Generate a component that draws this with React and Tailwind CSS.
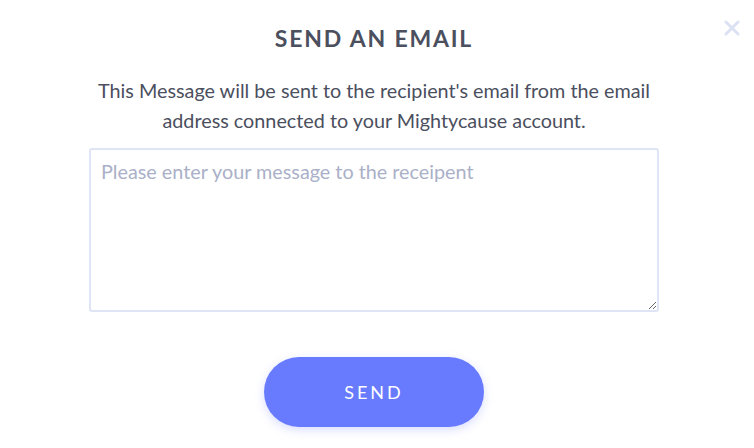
import React from 'react';

const CloseIcon = () => (
  <svg width="16" height="16" viewBox="0 0 16 16" fill="none">
    <path d="M2 2L14 14M14 2L2 14" stroke="#dde1f4" strokeWidth="3" strokeLinecap="round" />
  </svg>
);

const App = () => {
  return (
    <div className="relative w-[754px] h-[448px] bg-white overflow-hidden" style={{ fontFamily: 'Lato, "Open Sans", sans-serif' }}>
      <button aria-label="Close" className="absolute top-[20px] right-[14px]">
        <CloseIcon />
      </button>
      <div className="flex flex-col items-center pr-[6px] pt-[24px]">
        <h2 className="text-[23px] leading-[28px] font-bold tracking-[1.8px] text-[#4b4f5e]">SEND AN EMAIL</h2>
        <p className="mt-[23px] text-[19.8px] leading-[30px] text-center text-[#4b4f5e]">
          This Message will be sent to the recipient's email from the email
          <br />
          address connected to your Mightycause account.
        </p>
        <textarea
          className="mt-[13px] w-[570px] h-[164px] rounded-[3px] border-2 border-[#dfe5f5] px-[10px] py-[8px] text-[19.8px] leading-[26px] text-[#4b4f5e] placeholder:text-[#aab0c8] outline-none"
          placeholder="Please enter your message to the receipent"
        />
        <button className="mt-[45px] w-[220px] h-[70px] rounded-full bg-[#687bff] text-white text-[18px] tracking-[3px] shadow-[0_3px_10px_rgba(104,123,255,0.25)]">
          SEND
        </button>
      </div>
    </div>
  );
};

export default App;
